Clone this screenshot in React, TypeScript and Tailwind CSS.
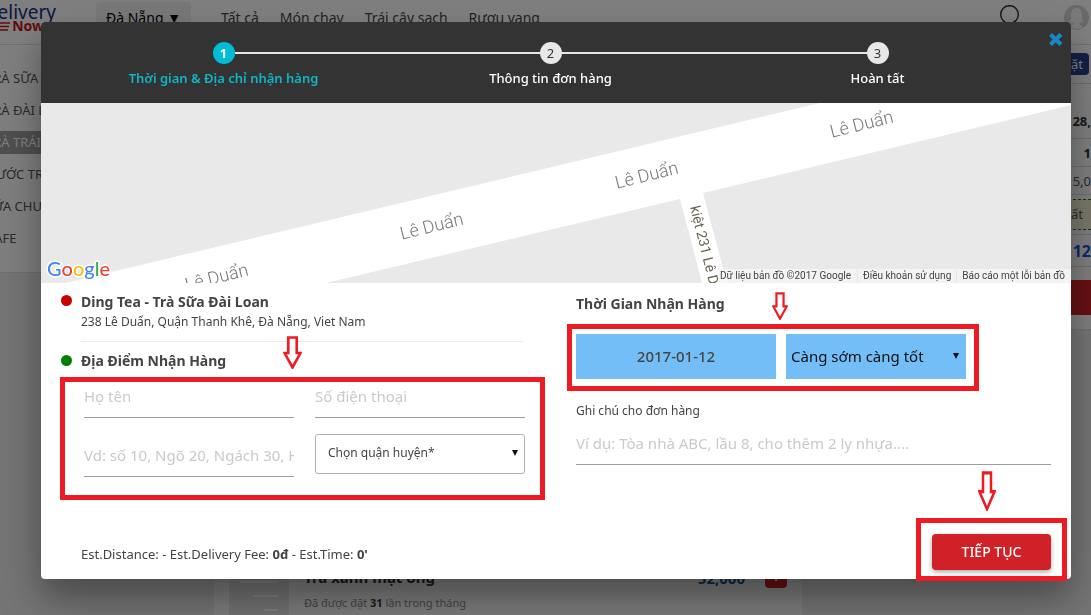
import React, { useState } from 'react'
import clsx from 'clsx'

const categories = ['TRÀ SỮA', 'TRÀ ĐÀI LOAN', 'TRÀ TRÁI CÂY', 'NƯỚC TRÁI CÂY', 'SỮA CHUA', 'CAFE']
const navLinks = ['Tất cả', 'Món chay', 'Trái cây sạch', 'Rượu vang']
const steps = ['Thời gian & Địa chỉ nhận hàng', 'Thông tin đơn hàng', 'Hoàn tất']

const fieldClass =
  'h-[43px] w-full min-w-0 border-b border-[#9e9e9e] bg-transparent text-[15px] text-[#444] outline-none placeholder:text-[#cacaca]'

const SiteHeader: React.FC = () => (
  <header className="flex h-[45px] shrink-0 items-start border-b border-[#e0e0e0] bg-white">
    <a href="#" className="-ml-4 flex w-[72px] shrink-0 flex-col items-end text-[#1b2f7e]">
      <span className="text-[19px] leading-6">delivery</span>
      <span className="-mt-1 flex items-center gap-0.5 pr-3 text-sm leading-3 font-bold text-[#c8141e]">
        <svg width="12" height="9" viewBox="0 0 12 9" stroke="currentColor" strokeWidth="1.5">
          <path d="M0 1h12M0 4.5h11M0 8h10" />
        </svg>
        Now
      </span>
    </a>
    <button className="mt-0.5 ml-10 h-[31px] w-[95px] shrink-0 rounded-sm bg-[#f0f0f0] text-sm text-black">
      Đà Nẵng ▼
    </button>
    <nav className="ml-[30px] flex gap-[21px] pt-2 text-sm leading-5 whitespace-nowrap text-[#444]">
      {navLinks.map(link => (
        <a key={link} href="#">{link}</a>
      ))}
    </nav>
    <div className="ml-auto flex gap-11 pt-[5px] pr-0.5">
      <svg width="21" height="25" viewBox="0 0 21 25" fill="none" stroke="#333" strokeWidth="1.5">
        <circle cx="10.500" cy="9.500" r="8.800" />
        <path d="M15 16l5 6" />
      </svg>
      <svg width="25" height="25" viewBox="0 0 25 25">
        <circle cx="12.500" cy="12.500" r="12.500" fill="#d2d2d2" />
        <path d="M12.500 3c-4 0-5.500 3-5.500 7 0 3-.5 6-1.500 7l4 .5v2L6 22c4 3 9 3 13 0l-3.500-2.500v-2l4-.5c-1-1-1.500-4-1.500-7 0-4-1.500-7-5.500-7z" fill="#f4f4f4" />
      </svg>
    </div>
  </header>
)

const CategoryList: React.FC = () => (
  <aside className="-ml-3.5 flex h-[228px] w-[213px] shrink-0 flex-col gap-[9px] border-b border-[#ddd] bg-white pt-[22px]">
    {categories.map((name, index) => (
      <a
        key={name}
        href="#"
        className={clsx('block text-[13px] leading-[23px]', index === 2 ? 'bg-[#a0a0a0] text-white' : 'text-[#555]')}
      >
        {name}
      </a>
    ))}
  </aside>
)

const ProductList: React.FC = () => (
  <section className="flex w-[588px] shrink-0 flex-col justify-end bg-[#fafafa]">
    <div className="flex h-[60px] pl-[15px]">
      <svg width="60" height="60" viewBox="0 0 60 60" className="shrink-0 bg-[#e6e6e6]" stroke="#fff" strokeWidth="2">
        <path d="M11 27h38M24 41h25M35 55h14" />
      </svg>
      <div className="flex-1 pt-2.5 pl-[15px]">
        <h3 className="text-[15px] leading-6 font-bold text-[#333]">Trà xanh mật ong</h3>
        <p className="mt-1.5 text-[11px] leading-4 text-[#888]">
          Đã được đặt <b className="text-[#333]">31</b> lần trong tháng
        </p>
      </div>
      <div className="flex items-start pt-[11px] pr-[15px]">
        <span className="mr-5 text-[15px] leading-6 font-bold text-[#0a5a96]">52,000</span>
        <button className="h-[22px] w-[22px] rounded bg-[#cf2127] text-base leading-5 font-bold text-white">+</button>
      </div>
    </div>
  </section>
)

const CartPanel: React.FC = () => (
  <aside className="ml-[15px] flex h-[285px] flex-1 flex-col border-b border-[#ddd] bg-white text-right text-[13px] text-[#555]">
    <div className="flex h-[39px] items-center justify-end border-b border-[#ddd] pr-0.5">
      <button className="h-[22px] rounded-sm bg-[#26408f] px-1.5 text-[13px] leading-5 text-white">Đặt</button>
    </div>
    <div className="flex h-[55px] items-end justify-end border-b border-[#ddd] pb-[7px] font-bold text-[#333]">128,</div>
    <div className="h-7 border-b border-[#ddd] leading-7 font-bold text-[#333]">1</div>
    <div className="h-7 border-b border-[#ddd] leading-7">5,0</div>
    <div className="h-10 border-b border-[#ddd] pt-1">
      <div className="h-[31px] border-y border-dashed border-[#1f7a1f] bg-[#f7f3d6] pr-2 leading-7">nhất</div>
    </div>
    <div className="h-8 border-b border-[#ddd] text-base leading-8 font-bold text-[#1155dd]">12</div>
    <div className="mt-[13px] h-[35px] shrink-0 bg-[#cf2127]" />
  </aside>
)

const Stepper: React.FC<{ current: number }> = ({ current }) => (
  <ol className="grid h-[81px] grid-cols-3 rounded-t-sm bg-[#333] pt-5 pr-[30px] pl-[19px]">
    {steps.map((label, index) => {
      const active = index === current
      return (
        <li key={label} className="flex flex-col items-center gap-1">
          <div className="flex w-full items-center">
            <span className={clsx('h-0.5 flex-1', index > 0 && 'bg-[#e8e8e8]')} />
            <span
              className={clsx(
                'h-[22px] w-[22px] rounded-full text-center text-[13px] leading-[22px]',
                active ? 'bg-[#00bcd4] font-bold text-white' : 'bg-[#e8e8e8] text-[#333]'
              )}
            >
              {index + 1}
            </span>
            <span className={clsx('h-0.5 flex-1', index < steps.length - 1 && 'bg-[#e8e8e8]')} />
          </div>
          <span
            className={clsx('text-[13px] leading-5', active ? 'font-semibold text-[#0fb6c4]' : 'font-medium text-white')}
          >
            {label}
          </span>
        </li>
      )
    })}
  </ol>
)

const MapView: React.FC = () => (
  <div className="relative h-[180px] overflow-hidden bg-[#e9e9e9] font-['Roboto']">
    <svg className="h-full w-full" viewBox="0 0 1030 180" preserveAspectRatio="xMidYMid slice">
      <path d="M24 180L779 0H1030V2L662 90L686 180H661L639 96L285 180Z" fill="#fff" />
      <g fill="#777" fontSize="18" fontWeight="300" textAnchor="middle">
        <text transform="translate(177 180) rotate(-14)">Lê Duẩn</text>
        <text transform="translate(392 129) rotate(-14)">Lê Duẩn</text>
        <text transform="translate(607 78) rotate(-14)">Lê Duẩn</text>
        <text transform="translate(822 27) rotate(-14)">Lê Duẩn</text>
      </g>
      <text transform="translate(649 104) rotate(76)" fill="#6b6654" fontSize="14">kiệt 231 Lê Duẩn</text>
      <text
        x="6"
        y="173"
        fontSize="20"
        fontWeight="500"
        fontFamily="Lato"
        stroke="#fff"
        strokeWidth="3"
        strokeLinejoin="round"
        paintOrder="stroke"
      >
        <tspan fill="#4285f4">G</tspan>
        <tspan fill="#ea4335">o</tspan>
        <tspan fill="#fbbc05">o</tspan>
        <tspan fill="#4285f4">g</tspan>
        <tspan fill="#34a853">l</tspan>
        <tspan fill="#ea4335">e</tspan>
      </text>
    </svg>
    <div className="absolute right-0 bottom-0 flex divide-x divide-[#e6e6e6] bg-[#f5f5f5]/80 text-[10px] leading-[14px] text-[#444]">
      <span className="pr-1.5 pl-0.5">Dữ liệu bản đồ ©2017 Google</span>
      <a href="#" className="px-[5px]">Điều khoản sử dụng</a>
      <a href="#" className="pr-1.5 pl-[5px]">Báo cáo một lỗi bản đồ</a>
    </div>
  </div>
)

// Red outline arrow pointing down at a highlighted area
const Arrow: React.FC<{ className: string }> = ({ className }) => (
  <svg viewBox="0 0 18 32" preserveAspectRatio="none" className={clsx('absolute', className)} fill="#fff" stroke="#ed1c24" strokeWidth="2.500">
    <path d="M5 1.500h8v15h3.500L9 30.500L1.500 16.500H5z" />
  </svg>
)

const Frame: React.FC<{ className: string }> = ({ className }) => (
  <div className={clsx('pointer-events-none absolute border-[5px] border-[#ed1c24]', className)} />
)

const DeliveryForm: React.FC = () => {
  const [date, setDate] = useState('2017-01-12')

  return (
    <form onSubmit={e => e.preventDefault()} className="text-[#444]">
      <div className="grid grid-cols-[535fr_495fr]">
        <div className="pt-[9px] pr-[51px] pl-10">
          <div className="relative mr-0.5 border-b border-[#ebebeb] pb-[9px]">
            <span className="absolute top-[3px] -left-5 h-[11px] w-[11px] rounded-full bg-[#c00]" />
            <h2 className="text-sm leading-5 font-bold">Ding Tea - Trà Sữa Đài Loan</h2>
            <p className="text-xs leading-5">238 Lê Duẩn, Quận Thanh Khê, Đà Nẵng, Viet Nam</p>
            <Arrow className="top-11 left-[202px] h-[33px] w-[19px]" />
          </div>
          <div className="relative mt-[9px]">
            <span className="absolute top-1 -left-5 h-[11px] w-[11px] rounded-full bg-[#008000]" />
            <h2 className="text-sm leading-5 font-bold">Địa Điểm Nhận Hàng</h2>
          </div>
          <div className="relative mt-1 grid grid-cols-2 items-start gap-x-[21px] gap-y-4 pl-[3px]">
            <input aria-label="Họ tên" placeholder="Họ tên" className={fieldClass} />
            <input aria-label="Số điện thoại" placeholder="Số điện thoại" className={fieldClass} />
            <input aria-label="Địa chỉ" placeholder="Vd: số 10, Ngõ 20, Ngách 30, Hẻm 40" className={fieldClass} />
            <div className="relative">
              <select
                aria-label="Chọn quận huyện"
                className="h-10 w-full appearance-none rounded-[3px] border border-[#a9b3bd] bg-white pb-0.5 pl-3 text-xs text-[#444] outline-none"
              >
                <option>Chọn quận huyện*</option>
              </select>
              <svg width="6" height="6" viewBox="0 0 6 6" className="pointer-events-none absolute top-4 right-[7px]">
                <path d="M0 0h6L3 6z" fill="#111" />
              </svg>
            </div>
            <Frame className="top-0.5 -right-5 -bottom-[23px] -left-[21px]" />
          </div>
        </div>

        <div className="pt-[11px] pr-5">
          <div className="relative">
            <h2 className="text-sm leading-5 font-bold">Thời Gian Nhận Hàng</h2>
            <Arrow className="-top-0.5 left-[196px] h-7 w-4" />
          </div>
          <div className="relative mt-5 flex w-[390px] gap-2.5">
            <input
              aria-label="Ngày nhận hàng"
              value={date}
              onChange={e => setDate(e.target.value)}
              className="h-[45px] w-[200px] bg-[#74bef8] pb-0.5 text-center text-[15px] font-medium outline-none"
            />
            <div className="relative flex-1">
              <select
                aria-label="Giờ nhận hàng"
                className="h-[45px] w-full appearance-none bg-[#74bef8] pl-[5px] text-[15px] text-[#111] outline-none"
              >
                <option>Càng sớm càng tốt</option>
              </select>
              <svg width="6" height="6" viewBox="0 0 6 6" className="pointer-events-none absolute top-[19px] right-[7px]">
                <path d="M0 0h6L3 6z" fill="#111" />
              </svg>
            </div>
            <Frame className="-top-2.5 -right-[13px] -bottom-3 -left-[9px]" />
          </div>
          <label htmlFor="note" className="mt-[22px] mb-px block text-xs leading-5">Ghi chú cho đơn hàng</label>
          <input id="note" placeholder="Ví dụ: Tòa nhà ABC, lầu 8, cho thêm 2 ly nhựa...." className={fieldClass} />
        </div>
      </div>

      <div className="mt-[57px] flex items-center justify-between pr-5 pb-[9px] pl-10">
        <p className="pt-1 text-[13px] leading-5">
          Est.Distance: - Est.Delivery Fee: <b className="font-bold">0đ</b> - Est.Time: <b className="font-bold">0'</b>
        </p>
        <div className="relative">
          <button
            type="submit"
            className="block h-9 w-[119px] rounded-sm bg-[#cf2127] text-sm font-medium text-white shadow-[0_2px_5px_rgba(0,0,0,0.35)]"
          >
            TIẾP TỤC
          </button>
          <Frame className="-inset-x-4 -top-4 -bottom-[11px]" />
          <Arrow className="-top-[63px] left-[46px] h-10 w-[18px]" />
        </div>
      </div>
    </form>
  )
}

export default function App() {
  const [open, setOpen] = useState(true)

  return (
    <div className="flex h-screen flex-col overflow-hidden bg-[#ebebeb] font-['Noto_Sans',sans-serif]">
      <SiteHeader />
      <main className="flex min-h-0 flex-1">
        <CategoryList />
        <div className="w-[15px] shrink-0" />
        <ProductList />
        <CartPanel />
      </main>

      {open && (
        <div className="fixed inset-0 overflow-hidden bg-black/50 pt-[22px] pr-5 pl-[41px]">
          <div
            role="dialog"
            aria-label="Đặt hàng"
            className="relative rounded-sm bg-white shadow-[0_16px_28px_rgba(0,0,0,0.22),0_25px_55px_rgba(0,0,0,0.21)]"
          >
            <Stepper current={0} />
            <button aria-label="Đóng" onClick={() => setOpen(false)} className="absolute top-[11px] right-2">
              <svg width="14" height="13" viewBox="0 0 14 13" stroke="#1689c4" strokeWidth="4.200">
                <path d="M1.500 1.500l10.500 10M12 1.500l-10.500 10" />
              </svg>
            </button>
            <MapView />
            <DeliveryForm />
          </div>
        </div>
      )}
    </div>
  )
}
